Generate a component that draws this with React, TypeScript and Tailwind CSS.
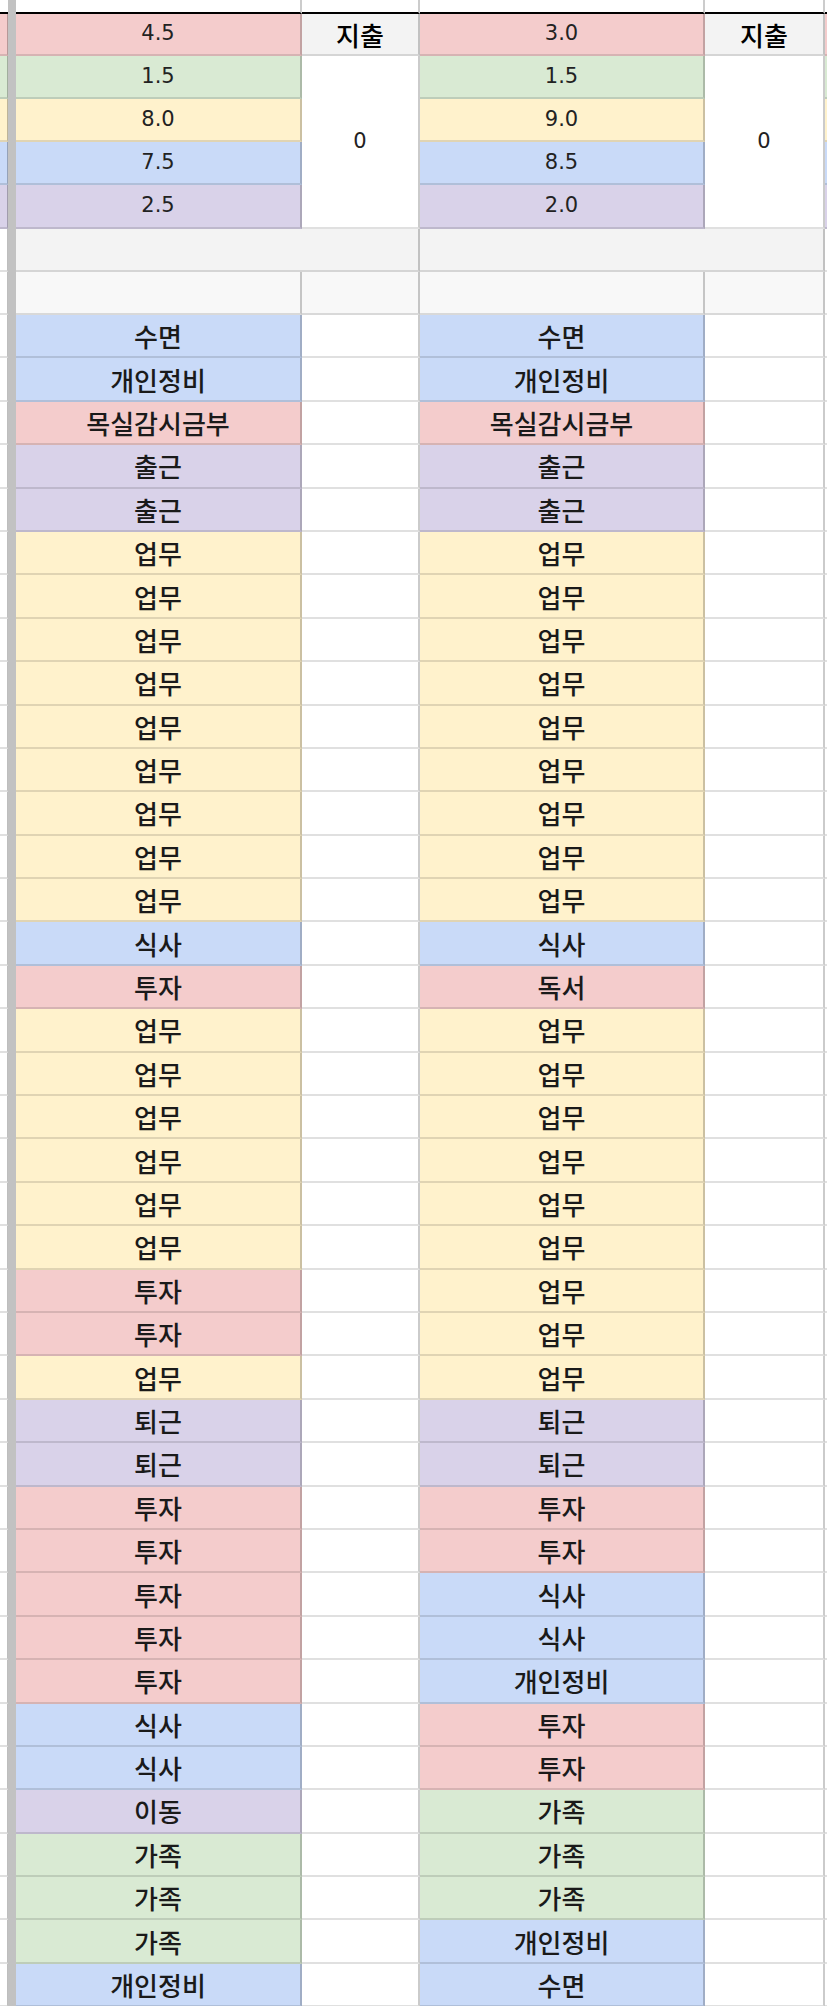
import React from 'react';

type Tone = 'pink' | 'green' | 'yellow' | 'blue' | 'purple';

const toneBg: Record<Tone, string> = {
  pink: 'bg-[#f4cccc]',
  green: 'bg-[#d9ead3]',
  yellow: 'bg-[#fff2cc]',
  blue: 'bg-[#c9daf8]',
  purple: 'bg-[#d9d2e9]'
};

const tones: Record<string, Tone> = {
  수면: 'blue',
  개인정비: 'blue',
  식사: 'blue',
  목실감시금부: 'pink',
  투자: 'pink',
  독서: 'pink',
  출근: 'purple',
  퇴근: 'purple',
  이동: 'purple',
  업무: 'yellow',
  가족: 'green'
};

const rep = (label: string, n: number) => Array.from({ length: n }, () => label);

const leftPlan = [
  '수면', '개인정비', '목실감시금부', '출근', '출근',
  ...rep('업무', 9), '식사', '투자', ...rep('업무', 6), '투자', '투자', '업무',
  '퇴근', '퇴근', ...rep('투자', 5), '식사', '식사', '이동', ...rep('가족', 3), '개인정비'
];

const rightPlan = [
  '수면', '개인정비', '목실감시금부', '출근', '출근',
  ...rep('업무', 9), '식사', '독서', ...rep('업무', 9),
  '퇴근', '퇴근', '투자', '투자', '식사', '식사', '개인정비', '투자', '투자',
  ...rep('가족', 3), '개인정비', '수면'
];

const summary: { left: string; right: string; tone: Tone }[] = [
  { left: '1.5', right: '1.5', tone: 'green' },
  { left: '8.0', right: '9.0', tone: 'yellow' },
  { left: '7.5', right: '8.5', tone: 'blue' },
  { left: '2.5', right: '2.0', tone: 'purple' }
];

const line = 'border-b-2 border-b-black/[0.12]';
const sep = 'border-r-2 border-r-black/[0.2]';
const num = "flex items-center justify-center text-[21px] text-[#222] font-['DejaVu_Sans',sans-serif]";
const word = "flex items-center justify-center text-[26px] font-medium text-[#1a1a1a] font-['Noto_Sans_CJK_KR',sans-serif]";

const Edge = ({ tone }: { tone?: Tone }) => (
  <div className={`${line} border-r border-r-black/[0.25] ${tone ? toneBg[tone] : 'bg-white'}`} />
);

const Tail = ({ tone }: { tone?: Tone }) => <div className={`${line} ${tone ? toneBg[tone] : 'bg-white'}`} />;

export default function App() {
  return (
    <div className="h-[2006px] w-[827px] overflow-hidden bg-white">
      <div className="grid grid-cols-[8px_8px_286px_118px_285px_120px_2px] grid-rows-[14px_42px_43px_43px_43px_44px_43px_43px_repeat(39,43.4px)]">
        <div className="col-start-2 row-span-full bg-[#c2c2c2]" />

        {/* frozen strip above the header line */}
        <div className="col-start-1 row-start-1 border-b-2 border-b-black" />
        <div className={`row-start-1 border-b-2 border-b-black ${sep}`} />
        <div className={`row-start-1 border-b-2 border-b-black ${sep}`} />
        <div className={`row-start-1 border-b-2 border-b-black ${sep}`} />
        <div className={`row-start-1 border-b-2 border-b-black ${sep}`} />
        <div className="row-start-1 border-b-2 border-b-black" />

        {/* header row */}
        <Edge tone="pink" />
        <div className={`${num} ${line} ${sep} ${toneBg.pink}`}>4.5</div>
        <div className={`${word} ${line} ${sep} bg-[#f3f3f3] font-bold text-black`}>지출</div>
        <div className={`${num} ${line} ${sep} ${toneBg.pink}`}>3.0</div>
        <div className={`${word} ${line} ${sep} bg-[#f3f3f3] font-bold text-black`}>지출</div>
        <Tail tone="pink" />

        {summary.map((s, i) => (
          <React.Fragment key={i}>
            <Edge tone={s.tone} />
            <div className={`${num} ${line} ${sep} ${toneBg[s.tone]}`}>{s.left}</div>
            {i === 0 && <div className={`${num} row-span-4 ${line} ${sep} bg-white`}>0</div>}
            <div className={`${num} ${line} ${sep} ${toneBg[s.tone]}`}>{s.right}</div>
            {i === 0 && <div className={`${num} row-span-4 ${line} ${sep} bg-white`}>0</div>}
            <Tail tone={s.tone} />
          </React.Fragment>
        ))}

        {/* spacer rows */}
        <Edge />
        <div className={`col-span-2 ${line} ${sep} bg-[#f3f3f3]`} />
        <div className={`col-span-2 ${line} ${sep} bg-[#f3f3f3]`} />
        <Tail />

        <Edge />
        <div className={`${line} ${sep} bg-[#f8f8f8]`} />
        <div className={`${line} ${sep} bg-[#f8f8f8]`} />
        <div className={`${line} ${sep} bg-[#f8f8f8]`} />
        <div className={`${line} ${sep} bg-[#f8f8f8]`} />
        <Tail />

        {leftPlan.map((l, i) => {
          const r = rightPlan[i];
          return (
            <React.Fragment key={`p${i}`}>
              <Edge />
              <div className={`${word} ${line} ${sep} ${toneBg[tones[l]]}`}>{l}</div>
              <div className={`${line} ${sep} bg-white`} />
              <div className={`${word} ${line} ${sep} ${toneBg[tones[r]]}`}>{r}</div>
              <div className={`${line} ${sep} bg-white`} />
              <Tail />
            </React.Fragment>
          );
        })}
      </div>
    </div>
  );
}
